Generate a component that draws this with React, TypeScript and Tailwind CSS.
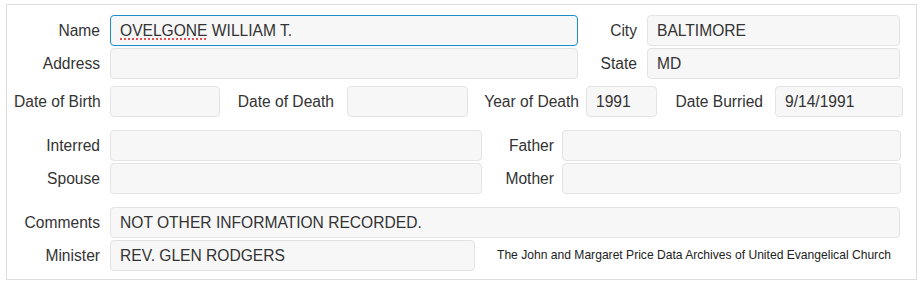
import React from "react";

const box =
  "h-[31px] rounded-[4px] border bg-[#f7f7f7] px-[9px] flex items-center text-[15.6px] text-[#333] whitespace-nowrap";
const lbl = "text-right text-[15.6px] text-[#333] whitespace-nowrap";

const Field = ({ w, children, focus }: { w: string; children?: React.ReactNode; focus?: boolean }) => (
  <div className={`${box} ${w} ${focus ? "border-[#1a8ccf]" : "border-[#e3e3e3]"}`}>{children}</div>
);

const App = () => {
  return (
    <div className="bg-white font-['Liberation_Sans',Arial,sans-serif] w-[924px] h-[287px] pt-[4px] pl-[6px]">
      <div className="w-[911px] h-[276px] border border-[#dddddd] pl-[7px] pt-[10px]">
        {/* nombre / ciudad */}
        <div className="flex items-center">
          <div className={`${lbl} w-[86px]`}>Name</div>
          <div className="ml-[10px]">
            <Field w="w-[468px]" focus>
              <span className="underline decoration-dotted decoration-[#d22] underline-offset-[3px]">OVELGONE</span>
              &nbsp;WILLIAM T.
            </Field>
          </div>
          <div className={`${lbl} w-[59px]`}>City</div>
          <div className="ml-[10px]">
            <Field w="w-[253px]">BALTIMORE</Field>
          </div>
        </div>
        <div className="flex items-center mt-[2px]">
          <div className={`${lbl} w-[86px]`}>Address</div>
          <div className="ml-[10px]">
            <Field w="w-[468px]" />
          </div>
          <div className={`${lbl} w-[59px]`}>State</div>
          <div className="ml-[10px]">
            <Field w="w-[253px]">MD</Field>
          </div>
        </div>

        {/* fechas */}
        <div className="flex items-center mt-[7px]">
          <div className={`${lbl} w-[86px]`}>Date of Birth</div>
          <div className="ml-[10px]">
            <Field w="w-[110px]" />
          </div>
          <div className={`${lbl} w-[114px]`}>Date of Death</div>
          <div className="ml-[13px]">
            <Field w="w-[121px]" />
          </div>
          <div className={`${lbl} w-[111px]`}>Year of Death</div>
          <div className="ml-[7px]">
            <Field w="w-[71px]">1991</Field>
          </div>
          <div className={`${lbl} w-[106px]`}>Date Burried</div>
          <div className="ml-[12px]">
            <Field w="w-[128px]">9/14/1991</Field>
          </div>
        </div>

        {/* familia */}
        <div className="flex items-center mt-[13px]">
          <div className={`${lbl} w-[86px]`}>Interred</div>
          <div className="ml-[10px]">
            <Field w="w-[372px]" />
          </div>
          <div className={`${lbl} w-[72px]`}>Father</div>
          <div className="ml-[8px]">
            <Field w="w-[339px]" />
          </div>
        </div>
        <div className="flex items-center mt-[2px]">
          <div className={`${lbl} w-[86px]`}>Spouse</div>
          <div className="ml-[10px]">
            <Field w="w-[372px]" />
          </div>
          <div className={`${lbl} w-[72px]`}>Mother</div>
          <div className="ml-[8px]">
            <Field w="w-[339px]" />
          </div>
        </div>

        {/* comentarios */}
        <div className="flex items-center mt-[13px]">
          <div className={`${lbl} w-[86px]`}>Comments</div>
          <div className="ml-[10px]">
            <Field w="w-[790px]">NOT OTHER INFORMATION RECORDED.</Field>
          </div>
        </div>
        <div className="flex items-center mt-[2px]">
          <div className={`${lbl} w-[86px]`}>Minister</div>
          <div className="ml-[10px]">
            <Field w="w-[365px]">REV. GLEN RODGERS</Field>
          </div>
          <div className="ml-[22px] text-[12.1px] text-[#222] whitespace-nowrap">
            The John and Margaret Price Data Archives of United Evangelical Church
          </div>
        </div>
      </div>
    </div>
  );
};

export default App;
